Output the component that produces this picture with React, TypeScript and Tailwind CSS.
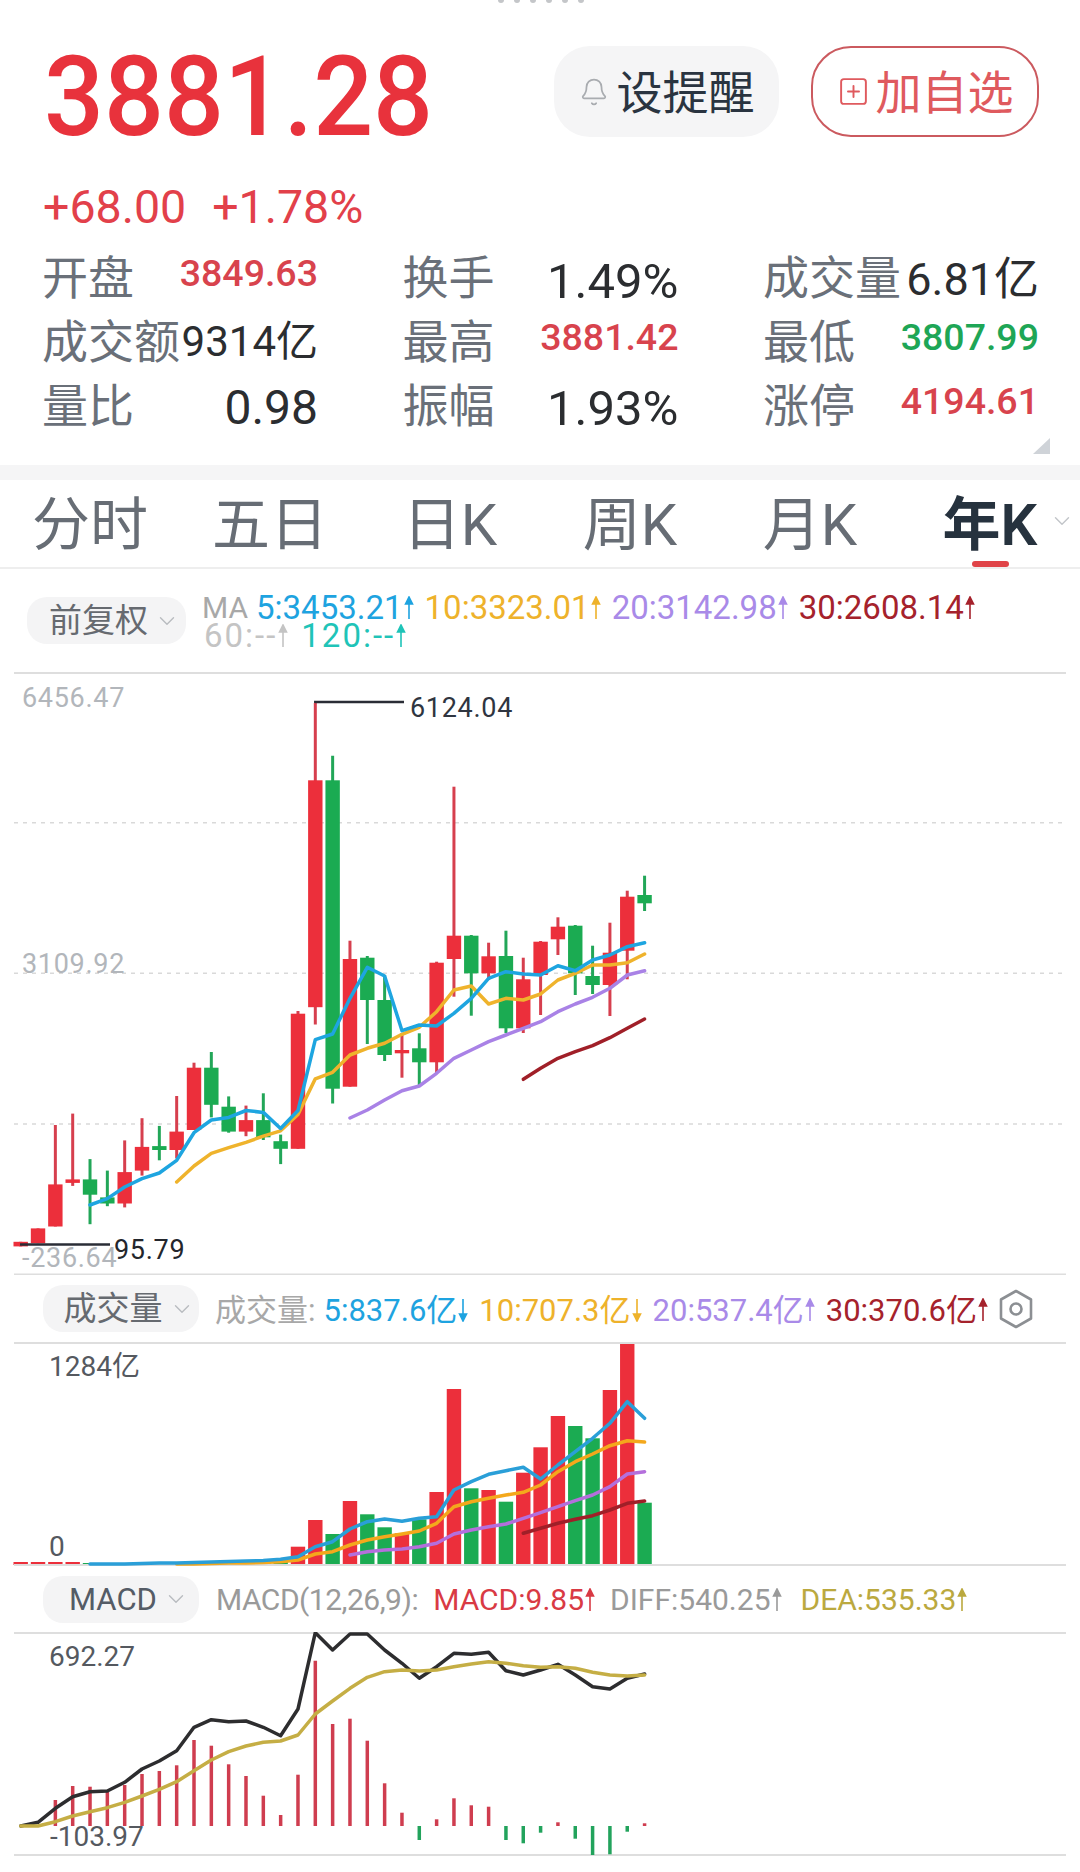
import { Bell, ChevronDown, SquarePlus } from "lucide-react";

const RED = "#ec2f3b";
const GREEN = "#1bab52";

// x of candle i, page coordinates
const cx = (i: number) => 20.7 + 17.33 * i;

// wick top, body top, body bottom, wick bottom, 1 = red
const candles: [number, number, number, number, number][] = [
  [1241.8, 1241.8, 1246.4, 1246.4, 1],
  [1228.4, 1228.4, 1243.3, 1243.3, 1],
  [1125, 1184.4, 1226.5, 1226.5, 1],
  [1113.6, 1179.4, 1182.9, 1185.9, 1],
  [1159.1, 1179.4, 1194.7, 1224.2, 0],
  [1170.6, 1197.4, 1203.5, 1206.2, 0],
  [1140.4, 1172.1, 1203.5, 1207.4, 1],
  [1118.2, 1146.9, 1170.6, 1175.6, 1],
  [1125.9, 1146.1, 1150, 1160.3, 0],
  [1096, 1131.6, 1150, 1158.4, 1],
  [1062.7, 1067.7, 1130, 1130, 1],
  [1052, 1067.7, 1104.8, 1117.4, 0],
  [1096.4, 1106.7, 1131.6, 1132.7, 0],
  [1105.6, 1120.1, 1131.6, 1136.2, 1],
  [1093.3, 1120.1, 1137.3, 1140, 0],
  [1134.6, 1141.2, 1148.8, 1164.1, 0],
  [1011, 1013.7, 1148.8, 1148.8, 1],
  [703, 780.3, 1007.2, 1024.4, 1],
  [755.8, 780.3, 1088.7, 1103.6, 0],
  [940.7, 959, 1086.7, 1086.7, 1],
  [956, 957.7, 1000, 1044, 0],
  [975, 1000, 1055, 1061, 0],
  [1033, 1050, 1053.3, 1077.7, 1],
  [1033.3, 1048.3, 1062.3, 1085, 0],
  [961.7, 962.7, 1062.3, 1073, 1],
  [786.7, 935.7, 959, 996.7, 1],
  [935, 935.7, 973.3, 1015.7, 0],
  [942.7, 956.3, 973.3, 980, 1],
  [930.7, 956, 1028.3, 1033, 0],
  [957.7, 979.3, 1028.3, 1033, 1],
  [941, 941.7, 975, 1015, 1],
  [917.3, 926.7, 939.3, 955, 1],
  [925, 925.7, 973.3, 995, 0],
  [945.7, 976, 985, 994, 0],
  [922.7, 952.7, 985, 1016, 1],
  [890.7, 896.7, 950.7, 979.3, 1],
  [875.7, 895, 903.3, 911, 0],
];

const volTops = [
  1562, 1562, 1562, 1562, 1563, 1563, 1563, 1563, 1563, 1562, 1561, 1561, 1561, 1560, 1560, 1559,
  1546.7, 1520, 1534, 1501, 1514.3, 1527.3, 1533.3, 1519.3, 1492, 1389, 1488.3, 1490, 1501.7, 1472.7,
  1447.3, 1416, 1426, 1438.3, 1390, 1343.3, 1502.7,
];

const macdBars = [
  1826, 1826, 1800, 1786, 1786.7, 1791.7, 1785, 1774, 1771, 1765.3, 1740, 1745.7, 1764.3, 1776, 1795.7,
  1815, 1774.7, 1660.7, 1724, 1718.7, 1740.7, 1783.3, 1812.7, 1840, 1819.3, 1798.3, 1805.3, 1806.7, 1840,
  1843.3, 1832.7, 1822.3, 1838.7, 1855, 1854.3, 1831.7, 1823.3,
];

const line = (from: number, ys: number[]) => ys.map((y, k) => `${cx(from + k).toFixed(1)},${y}`).join(" ");

const ma5 = [1205, 1198.6, 1187, 1178.7, 1173, 1160.3, 1132.7, 1120, 1117.4, 1110.5, 1112.4, 1128.5, 1110.5, 1039.7, 1034, 998.3, 967.3, 976, 1030.7, 1025, 1026, 1013.3, 998.3, 978.3, 971.7, 974, 975, 965.7, 970.7, 960, 955, 946.7, 942.7];
const ma10 = [1182, 1166, 1153.4, 1147.7, 1142.3, 1136.2, 1130.8, 1114.4, 1078.8, 1072.3, 1055, 1048.3, 1043.3, 1034.3, 1027.3, 1011.7, 990, 986, 1004, 998.3, 1000, 994, 980, 973.3, 965, 965, 962.7, 954];
const ma20 = [1118, 1110, 1100, 1090.7, 1086, 1073.3, 1058.3, 1050, 1041.7, 1035, 1028.3, 1021.7, 1011.7, 1004, 997.3, 988.3, 975, 970.7];
const ma30 = [1079.3, 1068.3, 1058.3, 1051.7, 1045.7, 1037.7, 1028.3, 1019];

const vol5 = [1564, 1564, 1564, 1563.5, 1563, 1563, 1562.5, 1562, 1561.5, 1561, 1560.5, 1559.3, 1556.7, 1546.7, 1541.7, 1529, 1521.7, 1519, 1521.3, 1518.3, 1516.7, 1490, 1481.7, 1474.3, 1470.7, 1467.3, 1479, 1465, 1451.7, 1438.3, 1423.3, 1401.7, 1418.3];
const vol10 = [1564, 1564, 1563.5, 1563, 1563, 1562.5, 1561.7, 1560, 1554, 1551.7, 1545, 1540, 1536.7, 1534, 1531, 1523.3, 1506.7, 1501.7, 1498.3, 1495, 1492.3, 1485, 1471.7, 1461.7, 1454, 1445.7, 1440.7, 1442];
const vol20 = [1555, 1551.7, 1550, 1549, 1546.7, 1543.3, 1534, 1530, 1526.7, 1524, 1518.3, 1512.7, 1506.7, 1500.7, 1495, 1486.7, 1474, 1471.7];
const vol30 = [1533.3, 1528.3, 1523.3, 1519.3, 1515.7, 1510, 1503.3, 1501];

const diff = [1826, 1822.3, 1808.3, 1796.7, 1791.7, 1791, 1782.3, 1769, 1761, 1750.7, 1727.3, 1719.7, 1721.7, 1721, 1727.3, 1735.7, 1709, 1632.7, 1650, 1634, 1634, 1650, 1663.3, 1678.3, 1666.7, 1653.3, 1654.3, 1652.3, 1670.7, 1675, 1670, 1664.3, 1675, 1686.7, 1689, 1678.3, 1674];
const dea = [1826, 1826, 1821.7, 1816, 1811.7, 1807.7, 1802.3, 1796, 1789.3, 1781.7, 1770.7, 1760, 1751.7, 1746, 1742.3, 1741, 1735, 1714, 1701, 1688.3, 1677.3, 1671.7, 1670, 1671, 1670, 1666.7, 1664, 1661.7, 1663.3, 1665.7, 1667.3, 1666.7, 1668.3, 1672.3, 1675, 1676, 1675];

const redValue = "mb-[9px] text-[37.5px] font-medium text-[#d8434d]";
const stats = [
  { label: "开盘", value: "3849.63", cls: redValue },
  { label: "换手", value: "1.49%", cls: "mt-[6px] text-[49px] text-[#2b2d30]" },
  { label: "成交量", value: "6.81亿", cls: "mt-[2px] text-[45px] text-[#2b2d30]" },
  { label: "成交额", value: "9314亿", cls: "text-[42px] text-[#2b2d30]" },
  { label: "最高", value: "3881.42", cls: redValue },
  { label: "最低", value: "3807.99", cls: "mb-[9px] text-[37.5px] font-medium text-[#1ea656]" },
  { label: "量比", value: "0.98", cls: "mt-[4px] text-[48px] text-[#2b2d30]" },
  { label: "振幅", value: "1.93%", cls: "mt-[4px] text-[49px] text-[#2b2d30]" },
  { label: "涨停", value: "4194.61", cls: redValue },
];

const tabs = ["分时", "五日", "日K", "周K", "月K"];

function Arrow({ down, color }: { down?: boolean; color: string }) {
  return (
    <svg width="10" height="24" viewBox="0 0 10 24" className="ml-[1px] shrink-0">
      <path
        d={down ? "M5 1V22M1.5 16L5 23L8.5 16Z" : "M5 2V23M1.5 8L5 1L8.5 8Z"}
        stroke={color}
        strokeWidth="1.6"
        fill={color}
      />
    </svg>
  );
}

function Legend({
  text,
  color,
  arrow,
  down,
  className,
}: {
  text: string;
  color: string;
  arrow?: boolean;
  down?: boolean;
  className?: string;
}) {
  return (
    <span className={`inline-flex items-center whitespace-nowrap ${className ?? ""}`} style={{ color }}>
      {text}
      {arrow && <Arrow color={color} down={down} />}
    </span>
  );
}

function Pill({ label, className }: { label: string; className: string }) {
  return (
    <div className={`flex h-[47px] items-center justify-center rounded-[20px] bg-[#f4f4f5] pl-[16px] ${className}`}>
      <span>{label}</span>
      <ChevronDown size={26} strokeWidth={1.3} className="ml-[6px] text-[#b9bcc0]" />
    </div>
  );
}

function Hline({ y }: { y: number }) {
  return <line x1="14" x2="1066" y1={y} y2={y} stroke="#dedede" strokeWidth="2" />;
}

function Dotted({ y }: { y: number }) {
  return <line x1="14" x2="1066" y1={y} y2={y} stroke="#d9d9d9" strokeWidth="1.5" strokeDasharray="4 5" />;
}

function Poly({ points, color, width = 3.5 }: { points: string; color: string; width?: number }) {
  return <polyline points={points} fill="none" stroke={color} strokeWidth={width} strokeLinejoin="round" strokeLinecap="round" />;
}

function KChart() {
  return (
    <div className="relative h-[603px]">
      <svg width="1080" height="603" viewBox="0 672 1080 603" className="block">
        <Hline y={673} />
        <Dotted y={822.7} />
        <Dotted y={973.3} />
        <Dotted y={1124} />
        <Hline y={1274.5} />
        {candles.map(([wt, bt, bb, wb, up], i) => (
          <g key={i}>
            <line x1={cx(i)} x2={cx(i)} y1={wt} y2={wb} stroke={up ? "#d63f4e" : "#22a658"} strokeWidth="3" />
            <rect x={cx(i) - 7.2} y={bt} width="14.4" height={bb - bt} fill={up ? RED : GREEN} />
          </g>
        ))}
        <Poly points={line(29, ma30)} color="#a01f28" />
        <Poly points={line(19, ma20)} color="#a982e6" />
        <Poly points={line(9, ma10)} color="#efb32c" />
        <Poly points={line(4, ma5)} color="#1ea5e0" />
        <path d="M315.3 703V702H404" fill="none" stroke="#2a2d36" strokeWidth="2.5" />
        <line x1="20" x2="110" y1="1244.5" y2="1244.5" stroke="#2a2d36" strokeWidth="2.5" />
      </svg>
      <span className="absolute left-[22px] top-[11px] text-[27px] leading-[30px] tracking-[0.7px] text-[#b2b6bb]">6456.47</span>
      <span className="absolute left-[22px] top-[277px] text-[27px] leading-[30px] tracking-[0.7px] text-[#b2b6bb]">3109.92</span>
      <span className="absolute left-[22px] top-[571px] text-[27px] leading-[30px] tracking-[0.7px] text-[#b2b6bb]">-236.64</span>
      <span className="absolute left-[410px] top-[21px] text-[27px] leading-[30px] tracking-[0.7px] text-[#2f3540]">6124.04</span>
      <span className="absolute left-[114px] top-[563px] text-[27px] leading-[30px] tracking-[0.7px] text-[#23262c]">95.79</span>
    </div>
  );
}

function VolumeChart() {
  return (
    <div className="relative h-[224px]">
      <svg width="1080" height="224" viewBox="0 1342 1080 224" className="block">
        {volTops.map((top, i) => (
          <rect key={i} x={cx(i) - 7.2} y={top} width="14.4" height={1565 - top} fill={candles[i][4] ? RED : GREEN} />
        ))}
        <Hline y={1343} />
        <Hline y={1565} />
        <Poly points={line(19, vol20)} color="#b46fdc" />
        <Poly points={line(29, vol30)} color="#a01f28" />
        <Poly points={line(9, vol10)} color="#f4a81c" />
        <Poly points={line(4, vol5)} color="#2a9fd8" />
      </svg>
      <span className="absolute left-[49px] top-[10px] text-[28px] leading-[30px] text-[#55595f]">1284亿</span>
      <span className="absolute left-[49px] top-[190px] text-[28px] leading-[30px] text-[#55595f]">0</span>
    </div>
  );
}

function MacdChart() {
  return (
    <div className="relative h-[224px]">
      <svg width="1080" height="224" viewBox="0 1632 1080 224" className="block">
        <Hline y={1633} />
        <Hline y={1855} />
        {macdBars.map((y, i) =>
          y === 1826 ? null : (
            <line
              key={i}
              x1={cx(i)}
              x2={cx(i)}
              y1={1826}
              y2={y}
              stroke={y < 1826 ? "#cf3d4f" : "#22a35c"}
              strokeWidth="3.5"
            />
          ),
        )}
        <Poly points={line(0, diff)} color="#2d2d2f" />
        <Poly points={line(0, dea)} color="#c5ae45" />
      </svg>
      <span className="absolute left-[49px] top-[10px] text-[28px] leading-[30px] text-[#55595f]">692.27</span>
      <span className="absolute left-[50px] top-[190px] text-[28px] leading-[30px] text-[#55595f]">-103.97</span>
    </div>
  );
}

export default function App() {
  return (
    <div className="flex h-[1872px] w-[1080px] flex-col overflow-hidden bg-white [font-family:Roboto,'Noto_Sans_CJK_SC',sans-serif]">
      <section className="relative h-[465px]">
        <div className="flex h-[4px] justify-center gap-[10px] pl-[2px]">
          {[0, 1, 2, 3, 4, 5].map((d) => (
            <span key={d} className="h-[3px] w-[6px] rounded-b-full bg-[#c4c6c9]" />
          ))}
        </div>
        <div className="mt-[42px] flex h-[91px] items-center pl-[44px]">
          <span className="mt-[6px] inline-block w-[510px] origin-top scale-y-[1.06] text-[105.5px] font-medium leading-none text-[#e8323c]">
            3881.28
          </span>
          <button className="flex h-[91px] w-[225px] items-center justify-center rounded-[36px] bg-[#f5f5f6] text-[#2a3440]">
            <Bell size={30} strokeWidth={1.4} className="mr-[8px] text-[#a9acb0]" />
            <span className="mt-[2px] text-[46px] leading-none">设提醒</span>
          </button>
          <button className="ml-[32px] flex h-[91px] w-[228px] items-center justify-center rounded-[40px] border-2 border-[#cb5a5f] text-[#df5a5e]">
            <SquarePlus size={33} strokeWidth={1.4} className="mr-[6px]" />
            <span className="mt-[2px] text-[46px] leading-none">加自选</span>
          </button>
        </div>
        <div className="mt-[48px] flex h-[44px] items-center gap-[26px] pl-[43px] text-[46.5px] leading-none text-[#e2404a]">
          <span>+68.00</span>
          <span>+1.78%</span>
        </div>
        <div className="mt-[17px] grid grid-cols-[276px_276px_276px] gap-x-[84.5px] px-[42px]">
          {stats.map((s) => (
            <div key={s.label} className="flex h-[64px] items-center justify-between whitespace-nowrap">
              <span className="text-[46px] leading-none text-[#6a7079]">{s.label}</span>
              <span className={`leading-none ${s.cls}`}>{s.value}</span>
            </div>
          ))}
        </div>
        <div className="absolute left-[1033px] top-[438px] h-0 w-0 border-b-[16px] border-l-[17px] border-b-[#cfd3d8] border-l-transparent" />
      </section>

      <div className="h-[15px] bg-[#f5f5f6]" />

      <nav className="relative grid h-[89px] grid-cols-6 border-b-2 border-[#eeeeee] text-[58px] leading-none text-[#676d75]">
        {tabs.map((t) => (
          <span key={t} className="flex items-center justify-center pt-[2px]">
            {t}
          </span>
        ))}
        <span className="flex items-center justify-center pt-[2px] font-semibold text-[#26323e]">年K</span>
        <ChevronDown size={26} strokeWidth={1.3} className="absolute left-[1049px] top-[28px] text-[#c2c5c9]" />
        <span className="absolute left-[972px] top-[81px] h-[6px] w-[37px] rounded-full bg-[#e04448]" />
      </nav>

      <div className="flex h-[103px] items-center pl-[27px]">
        <Pill label="前复权" className="w-[159px] text-[33px] text-[#666a70]" />
        <div className="ml-[16px] flex flex-col pt-[2px] text-[33px] leading-[28px]">
          <div className="flex items-center gap-[11px]">
            <Legend text="MA" color="#a8a8a8" className="text-[30px]" />
            <Legend text="5:3453.21" color="#1ea3e0" arrow className="-ml-[3px]" />
            <Legend text="10:3323.01" color="#eeb22b" arrow />
            <Legend text="20:3142.98" color="#a98ae8" arrow />
            <Legend text="30:2608.14" color="#a5222c" arrow />
          </div>
          <div className="flex items-center gap-[13px] pl-[2px]">
            <Legend text="60:--" color="#c4c4c4" arrow className="tracking-[2px]" />
            <Legend text="120:--" color="#1fc4b8" arrow className="tracking-[2px]" />
          </div>
        </div>
      </div>

      <KChart />

      <div className="flex h-[67px] items-center pl-[43px] text-[31px] leading-none">
        <Pill label="成交量" className="w-[156px] text-[33px] text-[#666a70]" />
        <div className="ml-[16px] flex items-center gap-[11px] pt-[3px]">
          <Legend text="成交量:" color="#a8a8a8" />
          <Legend text="5:837.6亿" color="#1ea3e0" arrow down className="-ml-[3px]" />
          <Legend text="10:707.3亿" color="#eeb22b" arrow down />
          <Legend text="20:537.4亿" color="#a98ae8" arrow />
          <Legend text="30:370.6亿" color="#a5222c" arrow />
        </div>
        <svg width="36" height="40" viewBox="0 0 36 40" className="ml-[10px] shrink-0">
          <path d="M18 2L33 10.5V29.5L18 38L3 29.5V10.5Z" fill="none" stroke="#8c8f93" strokeWidth="2.6" strokeLinejoin="round" />
          <circle cx="18" cy="20" r="5.5" fill="none" stroke="#8c8f93" strokeWidth="2.6" />
        </svg>
      </div>

      <VolumeChart />

      <div className="flex h-[66px] items-center pl-[43px] text-[30px] leading-none">
        <Pill label="MACD" className="w-[156px] text-[31px] text-[#555c66]" />
        <div className="ml-[17px] flex items-center gap-[15px] pt-[2px]">
          <Legend text="MACD(12,26,9):" color="#9a9a9a" className="tracking-[-0.5px]" />
          <Legend text="MACD:9.85" color="#d93a44" arrow />
          <Legend text="DIFF:540.25" color="#9a9a9a" arrow />
          <Legend text="DEA:535.33" color="#bba93f" arrow className="ml-[4px]" />
        </div>
      </div>

      <MacdChart />
    </div>
  );
}
